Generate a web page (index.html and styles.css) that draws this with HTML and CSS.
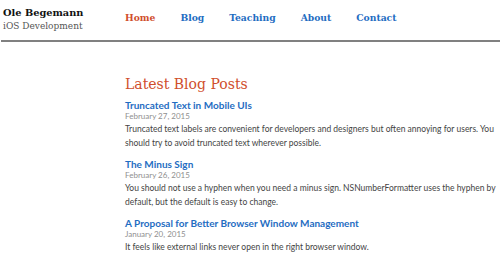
FILE: index.html
```html
<!DOCTYPE html>
<html>
<head>
<meta charset="utf-8">
<link rel="stylesheet" href="styles.css">
</head>
<body>
<header class="site-header">
  <div class="brand">
    <div class="brand-name">Ole Begemann</div>
    <div class="brand-sub">iOS Development</div>
  </div>
  <nav class="nav">
    <a class="nav-link active" href="#">Home</a>
    <a class="nav-link" href="#">Blog</a>
    <a class="nav-link" href="#">Teaching</a>
    <a class="nav-link" href="#">About</a>
    <a class="nav-link" href="#">Contact</a>
  </nav>
</header>
<main class="content">
  <h2 class="section-title">Latest Blog Posts</h2>
  <article class="post">
    <h3 class="post-title"><a href="#">Truncated Text in Mobile UIs</a></h3>
    <div class="post-date">February 27, 2015</div>
    <p class="post-excerpt">Truncated text labels are convenient for developers and designers but often annoying for users. You should try to avoid truncated text wherever possible.</p>
  </article>
  <article class="post">
    <h3 class="post-title"><a href="#">The Minus Sign</a></h3>
    <div class="post-date">February 26, 2015</div>
    <p class="post-excerpt">You should not use a hyphen when you need a minus sign. NSNumberFormatter uses the hyphen by default, but the default is easy to change.</p>
  </article>
  <article class="post">
    <h3 class="post-title"><a href="#">A Proposal for Better Browser Window Management</a></h3>
    <div class="post-date">January 20, 2015</div>
    <p class="post-excerpt">It feels like external links never open in the right browser window.</p>
  </article>
</main>
</body>
</html>
```
FILE: styles.css
```css
html, body {
  margin: 0;
  padding: 0;
  background: #fff;
}
body {
  font-family: Lato, "Open Sans", sans-serif;
  color: #444;
}
.site-header {
  display: flex;
  align-items: flex-start;
  border-bottom: 2px solid #808080;
  padding: 6px 0 0 2px;
  height: 34px;
  margin: 0 0 0 1px;
}
.brand {
  width: 122px;
}
.brand-name {
  font-family: "DejaVu Serif", serif;
  font-weight: bold;
  font-size: 9.8px;
  color: #111;
  line-height: 14px;
}
.brand-sub {
  font-family: "DejaVu Serif", serif;
  font-size: 9px;
  color: #555;
  line-height: 12px;
}
.nav {
  display: flex;
  gap: 25px;
  padding-top: 5px;
}
.nav-link {
  font-family: "DejaVu Serif", serif;
  font-weight: bold;
  font-size: 9.2px;
  color: #1f6dc2;
  text-decoration: none;
  line-height: 14px;
}
.nav-link.active {
  color: #d04e2c;
}
.content {
  margin-left: 125px;
  padding-top: 33px;
  padding-right: 0;
}
.section-title {
  font-family: "DejaVu Serif", serif;
  font-weight: normal;
  font-size: 14px;
  color: #d04e2c;
  margin: 0 0 6px;
  line-height: 18px;
}
.post {
  margin-bottom: 8px;
}
.post-title {
  margin: 0;
  font-size: 10px;
  font-weight: bold;
  line-height: 12px;
}
.post-title a {
  color: #1f6dc2;
  text-decoration: none;
}
.post-date {
  font-size: 8px;
  color: #8f8f8f;
  line-height: 11px;
}
.post-excerpt {
  margin: 0;
  font-size: 8.5px;
  line-height: 14px;
  color: #444;
}
```
